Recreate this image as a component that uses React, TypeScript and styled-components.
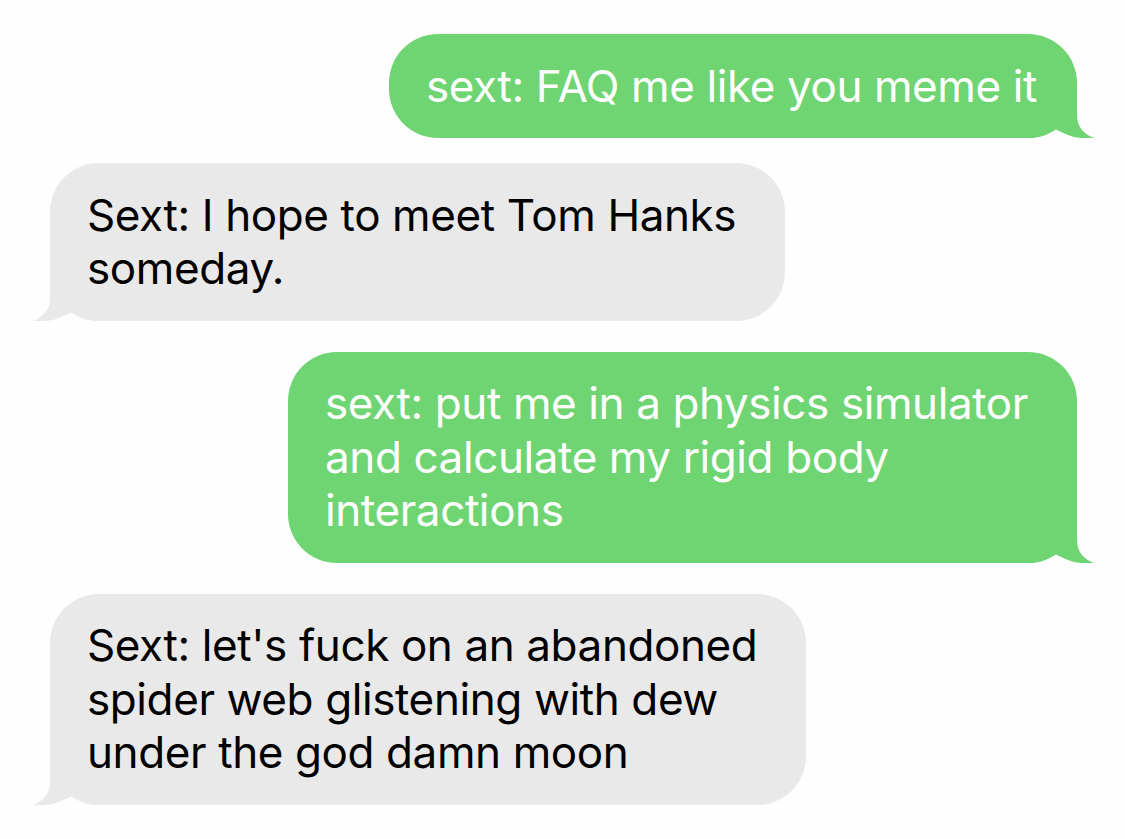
import React from "react";
import styled, { createGlobalStyle } from "styled-components";

const Global = createGlobalStyle`
  html, body { margin: 0; padding: 0; background: #fefefe; }
  body { font-family: Inter, "Liberation Sans", sans-serif; }
`;

const Thread = styled.div`
  display: flex;
  flex-direction: column;
  gap: 31px;
  padding: 34px 48px 0 50px;
  width: 1125px;
  box-sizing: border-box;
`;

const Bubble = styled.div<{ $sent?: boolean; $shift?: number; $first?: boolean }>`
  position: relative;
  align-self: ${(p) => (p.$sent ? "flex-end" : "flex-start")};
  margin-top: ${(p) => p.$shift ?? 0}px;
  background: ${(p) => (p.$sent ? "#6fd572" : "#e9e9e9")};
  color: ${(p) => (p.$sent ? "#ffffff" : "#000000")};
  border-radius: 49px;
  padding: 25.5px ${(p) => (p.$first ? 40 : 49)}px 25px 37px;
  font-size: 44px;
  line-height: 53.5px;
  letter-spacing: -0.4px;
  white-space: nowrap;
`;

const Line = styled.span`
  position: relative;
  z-index: 1;
  display: block;
`;

const TailSvg = styled.svg<{ $sent?: boolean }>`
  position: absolute;
  bottom: 0;
  width: 70px;
  height: 50px;
  ${(p) => (p.$sent ? "right: -20px;" : "left: -20px; transform: scaleX(-1);")}
`;

const Tail = ({ sent, color }: { sent?: boolean; color: string }) => (
  <TailSvg $sent={sent} viewBox="0 0 70 50">
    <path
      d="M0,0 L50,0 L50,27 C50,38 56,46 67,50 C58,51 49,50 41,47 C36,45 32,43 28,41 C22,46 13,50 3,50 L0,50 Z"
      fill={color}
    />
  </TailSvg>
);

const GREEN = "#6fd572";
const GRAY = "#e9e9e9";

export default function App() {
  return (
    <>
      <Global />
      <Thread>
        <Bubble $sent $first>
          <Line>sext: FAQ me like you meme it</Line>
          <Tail sent color={GREEN} />
        </Bubble>
        <Bubble $shift={-6}>
          <Line>Sext: I hope to meet Tom Hanks</Line>
          <Line>someday.</Line>
          <Tail color={GRAY} />
        </Bubble>
        <Bubble $sent>
          <Line>sext: put me in a physics simulator</Line>
          <Line>and calculate my rigid body</Line>
          <Line>interactions</Line>
          <Tail sent color={GREEN} />
        </Bubble>
        <Bubble>
          <Line>Sext: let's fuck on an abandoned</Line>
          <Line>spider web glistening with dew</Line>
          <Line>under the god damn moon</Line>
          <Tail color={GRAY} />
        </Bubble>
      </Thread>
    </>
  );
}
